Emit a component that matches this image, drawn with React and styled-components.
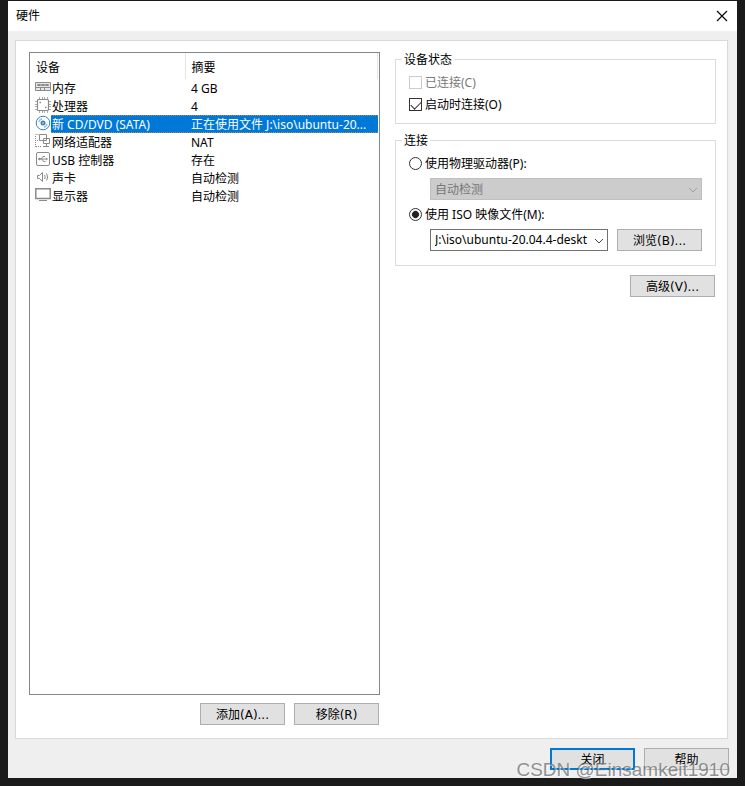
import { useState } from 'react';
import styled, { createGlobalStyle } from 'styled-components';

const devices = [
  { id: 'memory', name: '内存', summary: '4 GB' },
  { id: 'cpu', name: '处理器', summary: '4' },
  { id: 'disc', name: '新 CD/DVD (SATA)', summary: '正在使用文件 J:\\iso\\ubuntu-20...' },
  { id: 'network', name: '网络适配器', summary: 'NAT' },
  { id: 'usb', name: 'USB 控制器', summary: '存在' },
  { id: 'sound', name: '声卡', summary: '自动检测' },
  { id: 'display', name: '显示器', summary: '自动检测' },
];

const drawings = {
  memory: (
    <>
      <path d="M.5 3.5h15v8H.5z" fill="#e8e8e8" />
      <path d="M2.5 5.5h3v1h-3zM6.5 5.5h3v1h-3zM10.5 5.5h3v1h-3z" />
      <path d="M1 8.5h14M5.5 9v2M9.5 9v2" />
    </>
  ),
  cpu: (
    <>
      <rect x="2.5" y="2.5" width="11" height="11" rx="1" strokeWidth="1.2" />
      <path
        d="M4.5 2V0M7.5 2V0M9.5 2V0M12.5 2V0M4.5 14v2M7.5 14v2M9.5 14v2M12.5 14v2M2 4.5H0M2 7.5H0M2 9.5H0M2 12.5H0M14 4.5h2M14 7.5h2M14 9.5h2M14 12.5h2"
        stroke="#aaa"
      />
      <path d="M4.5 5.500h1.500M10 10.500h1.500" strokeWidth="1.5" />
    </>
  ),
  disc: (
    <g stroke="#3a86c0">
      <circle cx="8" cy="8" r="6.8" fill="#fff" />
      <circle cx="8" cy="8" r="1.6" strokeWidth="1.8" />
      <path
        d="M3.8 7A4.500 4.500 0 0 1 7 3.800M12.200 9A4.500 4.500 0 0 1 9 12.200"
        strokeWidth="1.5"
        stroke="#9cc6e6"
      />
    </g>
  ),
  network: (
    <>
      <path d="M4.5 1.5h7v6h-7zM8.5 5.5h6v5h-6z" fill="#fff" />
      <path d="M11.5 11v2M8 13.5h6" />
      <path d="M.5 1.5h3M.5 3v11M1 13.5h6M2 7.5h2" strokeDasharray="1 1" />
    </>
  ),
  usb: (
    <>
      <rect x="1.5" y="1.5" width="13" height="13" rx="1.5" />
      <path d="M4 8h8M6 8l2-2.500h2M7 8l1.500 2.500h2" />
      <circle cx="4.5" cy="8" r="1.3" fill="#8a8a8a" stroke="none" />
      <path d="M11 6.500l2 1.500-2 1.500z" fill="#8a8a8a" stroke="none" />
    </>
  ),
  sound: (
    <>
      <path d="M2.5 6.500h2l3-3v9l-3-3h-2z" />
      <path d="M9.500 6q1.500 2 0 4M11.500 4.500q2.500 3.500 0 7" />
    </>
  ),
  display: (
    <>
      <path d="M.8 1.800h14.400v9.700H.8z" fill="#fff" strokeWidth="1.5" />
      <path d="M4 13.500h8" />
    </>
  ),
};

const DeviceIcon = ({ id }) => (
  <svg width="16" height="16" viewBox="0 0 16 16" fill="none" stroke="#8a8a8a" aria-hidden="true">
    {drawings[id]}
  </svg>
);

const Dropdown = ({ label, disabled, options }) => (
  <SelectBox>
    <Select aria-label={label} disabled={disabled}>
      {options.map((option) => (
        <option key={option}>{option}</option>
      ))}
    </Select>
    <Chevron width="10" height="6" viewBox="0 0 10 6" fill="none" $disabled={disabled}>
      <path d="M1 1l4 4 4-4" />
    </Chevron>
  </SelectBox>
);

const App = () => {
  const [selected, setSelected] = useState('disc');
  const [source, setSource] = useState('iso');

  return (
    <Desktop>
      <GlobalStyle />
      <Window>
        <TitleBar>
          <Title>硬件</Title>
          <CloseButton aria-label="关闭窗口">
            <svg width="12" height="12" viewBox="0 0 12 12" stroke="#000" strokeWidth="1.1">
              <path d="M1 1l10 10M11 1L1 11" />
            </svg>
          </CloseButton>
        </TitleBar>
        <Panel>
          <Column>
            <DeviceList>
              <DeviceTable>
                <thead>
                  <tr>
                    <HeadCell $first>设备</HeadCell>
                    <HeadCell>摘要</HeadCell>
                  </tr>
                </thead>
                <tbody>
                  {devices.map(({ id, name, summary }) => (
                    <Row key={id} $selected={id === selected} onClick={() => setSelected(id)}>
                      <td>
                        <Device>
                          <DeviceIcon id={id} />
                          <DeviceName>{name}</DeviceName>
                        </Device>
                      </td>
                      <Summary>{summary}</Summary>
                    </Row>
                  ))}
                </tbody>
              </DeviceTable>
            </DeviceList>
            <Actions>
              <Button>添加(A)...</Button>
              <Button>移除(R)</Button>
            </Actions>
          </Column>
          <Settings>
            <Group>
              <legend>设备状态</legend>
              <Choice $disabled>
                <Check type="checkbox" disabled />
                已连接(C)
              </Choice>
              <Choice>
                <Check type="checkbox" defaultChecked />
                启动时连接(O)
              </Choice>
            </Group>
            <Group $spaced>
              <legend>连接</legend>
              <Choice>
                <Radio
                  type="radio"
                  name="source"
                  checked={source === 'drive'}
                  onChange={() => setSource('drive')}
                />
                使用物理驱动器(P):
              </Choice>
              <Indent>
                <Dropdown label="物理驱动器" disabled={source !== 'drive'} options={['自动检测']} />
              </Indent>
              <Choice>
                <Radio
                  type="radio"
                  name="source"
                  checked={source === 'iso'}
                  onChange={() => setSource('iso')}
                />
                使用 ISO 映像文件(M):
              </Choice>
              <Indent>
                <Dropdown label="ISO 映像文件" options={['J:\\iso\\ubuntu-20.04.4-deskt']} />
                <Button>浏览(B)...</Button>
              </Indent>
            </Group>
            <Actions>
              <Button>高级(V)...</Button>
            </Actions>
          </Settings>
        </Panel>
        <Footer>
          <Button $primary>关闭</Button>
          <Button>帮助</Button>
        </Footer>
      </Window>
      <Watermark>CSDN @Einsamkeit1910</Watermark>
    </Desktop>
  );
};

const GlobalStyle = createGlobalStyle`
  * {
    box-sizing: border-box;
  }
  body {
    margin: 0;
    background: #1a1a1a;
  }
  body, button, select {
    font: 12px/16px "Noto Sans", "Noto Sans CJK SC", sans-serif;
    color: #000;
  }
`;

const Desktop = styled.div`
  position: relative;
  display: flex;
  min-height: 100vh;
  padding: 1px 8px 8px;
`;

const Window = styled.main`
  display: flex;
  flex: 1;
  flex-direction: column;
  min-width: 0;
  background: #efefef;
`;

const TitleBar = styled.header`
  display: flex;
  align-items: center;
  justify-content: space-between;
  height: 30px;
  padding: 0 8px;
  background: #fff;
`;

const Title = styled.h1`
  margin: 0;
  font-size: 12px;
  font-weight: normal;
`;

const CloseButton = styled.button`
  display: flex;
  padding: 1px;
  border: 0;
  background: none;
`;

const Panel = styled.section`
  display: grid;
  flex: 1;
  grid-template-columns: 351fr 321fr;
  gap: 15px;
  margin: 9px 9px 0 7px;
  padding: 11px 11px 13px 13px;
  border: 1px solid #d9d9d9;
  background: #fff;
`;

const Column = styled.div`
  display: flex;
  flex-direction: column;
  gap: 8px;
  min-width: 0;
`;

const Settings = styled(Column)`
  gap: 9px;
`;

const DeviceList = styled.div`
  flex: 1;
  padding-right: 1px;
  border: 1px solid #828790;
`;

const DeviceTable = styled.table`
  width: 100%;
  table-layout: fixed;
  border-collapse: collapse;
  td {
    height: 18px;
    padding: 0;
  }
`;

const HeadCell = styled.th`
  width: ${({ $first }) => ($first ? '155px' : 'auto')};
  height: 26px;
  padding: 3px 6px 0;
  border-right: 1px solid #e5e5e5;
  font-weight: normal;
  text-align: left;
`;

const Device = styled.div`
  display: flex;
  padding-left: 5px;
  svg {
    flex: none;
  }
`;

const DeviceName = styled.span`
  flex: 1;
  height: 18px;
  padding: 2px 1px 0;
  white-space: nowrap;
`;

const Summary = styled.td`
  overflow: hidden;
  white-space: nowrap;
`;

const Row = styled.tr`
  ${Summary} {
    padding: 2px 6px 0;
  }
  ${DeviceName}, ${Summary} {
    color: ${({ $selected }) => ($selected ? '#fff' : '#000')};
    background-color: ${({ $selected }) => ($selected ? '#0078d7' : 'transparent')};
    background-image: ${({ $selected }) =>
      $selected
        ? 'repeating-linear-gradient(90deg, #b08a5a 0 1px, transparent 1px 2px), repeating-linear-gradient(90deg, #b08a5a 0 1px, transparent 1px 2px)'
        : 'none'};
    background-position: top, bottom;
    background-repeat: repeat-x;
    background-size: 100% 1px;
  }
`;

const Actions = styled.div`
  display: flex;
  justify-content: flex-end;
  gap: 9px;
  padding-right: 1px;
`;

const Button = styled.button`
  flex: none;
  width: 85px;
  height: 22px;
  padding: 2px 0 0;
  border: ${({ $primary }) => ($primary ? '2px solid #0078d7' : '1px solid #adadad')};
  background: #e1e1e1;
  font-family: "DejaVu Sans", "Noto Sans CJK SC", sans-serif;
`;

const Group = styled.fieldset`
  display: flex;
  flex-direction: column;
  gap: ${({ $spaced }) => ($spaced ? '4px' : '1px')};
  min-width: 0;
  margin: 0;
  padding: ${({ $spaced }) => ($spaced ? '5px 13px 14px' : '5px 13px 8px')};
  border: 1px solid #dcdcdc;
  legend {
    margin-left: -7px;
    padding: 0 2px;
    line-height: 15px;
  }
`;

const Choice = styled.label`
  display: flex;
  align-items: center;
  gap: 3px;
  height: 21px;
  color: ${({ $disabled }) => ($disabled ? '#7a7a7a' : '#000')};
`;

const Check = styled.input`
  appearance: none;
  width: 13px;
  height: 13px;
  margin: 0;
  border: 1px solid #333;
  background: #fff;
  &:disabled {
    border-color: #ccc;
  }
  &:checked::before {
    content: '';
    display: block;
    width: 9px;
    height: 5px;
    margin: 2px 1px;
    border: solid #333;
    border-width: 0 0 1px 1px;
    transform: rotate(-45deg);
  }
`;

const Radio = styled(Check)`
  border-radius: 50%;
  &:checked::before {
    width: 7px;
    height: 7px;
    margin: 2px;
    border: 0;
    border-radius: 50%;
    background: #222;
  }
`;

const Indent = styled.div`
  display: flex;
  gap: 9px;
  padding-left: 21px;
`;

const SelectBox = styled.div`
  position: relative;
  flex: 1;
  min-width: 0;
`;

const Select = styled.select`
  display: block;
  appearance: none;
  width: 100%;
  height: 22px;
  padding: 0 18px 0 4px;
  border: 1px solid #707070;
  border-radius: 0;
  background: #fff;
  &:disabled {
    padding-top: 2px;
    border-color: #bfbfbf;
    background: #ccc;
    color: #787878;
    opacity: 1;
  }
`;

const Chevron = styled.svg`
  position: absolute;
  top: 9px;
  right: 4px;
  stroke: ${({ $disabled }) => ($disabled ? '#a0a0a0' : '#444')};
  pointer-events: none;
`;

const Footer = styled.footer`
  display: flex;
  justify-content: flex-end;
  gap: 9px;
  padding: 9px 8px 8px;
`;

const Watermark = styled.div`
  position: absolute;
  right: 15px;
  bottom: 5px;
  color: rgba(110, 110, 110, 0.75);
  font: 19px/22px "Liberation Sans", sans-serif;
  text-shadow: 1px 1px 0 rgba(255, 255, 255, 0.6);
  pointer-events: none;
`;

export default App;
